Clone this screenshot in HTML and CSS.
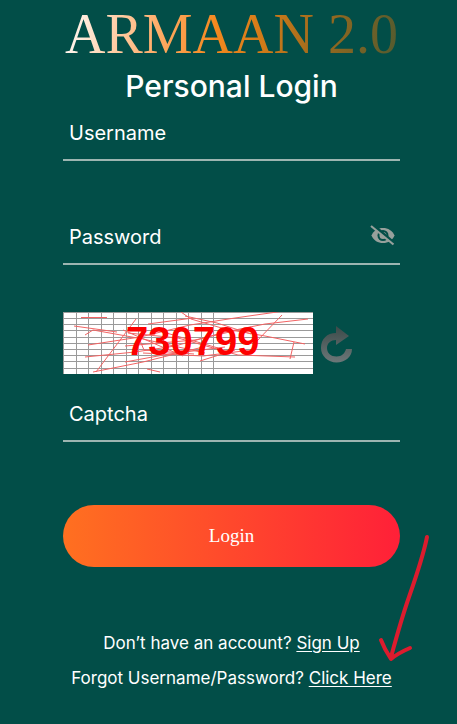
FILE: index.html
```
<!DOCTYPE html>
<html lang="en">
<head>
  <meta charset="UTF-8" />
  <meta name="viewport" content="width=device-width, initial-scale=1.0"/>
  <title>ARMAAN 2.0</title>
  <link rel="stylesheet" href="styles.css">
</head>
<body>

  <main class="container">
    <h1 class="brand">ARMAAN 2.0</h1>
    <h2 class="title">Personal Login</h2>

    <form class="login-form" onsubmit="return false">
      <div class="field">
        <label for="username">Username</label>
        <input type="text" id="username" />
      </div>

      <div class="field">
        <label for="password">Password</label>
        <input type="password" id="password" />
        <button type="button" class="toggle-btn" aria-label="Show password">
          <svg width="26" height="24" viewBox="0 0 26 24">
            <path d="M1.500 12.500C3.500 7.500 8 5 13 5s9.500 2.500 11.500 7.500C22.500 17.500 18 20 13 20S3.500 17.500 1.500 12.500z" fill="#97a09c"/>
            <circle cx="13" cy="12.500" r="5.500" fill="#024e48"/>
            <circle cx="13" cy="12.500" r="3.500" fill="#97a09c"/>
            <path d="M3 2l22 19" stroke="#024e48" stroke-width="3"/>
            <path d="M1 3l22.500 18.500" stroke="#97a09c" stroke-width="2.200"/>
          </svg>
        </button>
      </div>

      <!-- Captcha -->
      <div class="captcha-row">
        <svg class="captcha" width="250" height="62" viewBox="0 0 250 62" role="img" aria-label="Captcha code">
          <rect width="250" height="62" fill="#fff"/>
          <path shape-rendering="crispEdges" fill="none" stroke="#9a9a9a" d="M0 .5h250M0 6.500h250M0 12.500h250M0 18.500h250M0 25.500h250M0 31.500h250M0 37.500h250M0 43.500h250M0 49.500h250M0 56.500h250M.5 0v62M13.500 0v62M25.500 0v62M38.500 0v62M50.500 0v62M63.500 0v62M75.500 0v62M88.500 0v62M100.500 0v62M113.500 0v62M125.500 0v62M138.500 0v62M150.500 0v62"/>
          <g fill="none" stroke="#f26464" stroke-width="1">
            <path d="M18 5.500h26M11 14l43 6M22 23l8-5 50 9 62 14M25 33l52-8 50-12 45-7 49-7"/>
            <path d="M22 45l50-5 40-6 50-14 40-8 43-5M33 60L73 7M30 60l50-10 60-15M62 50l44-8 56-7"/>
            <path d="M118 0l10 7 34 10 40 7 40 8M85 12l45-6M122 4l32 7 34 11M192 31L219 3"/>
            <path d="M65 21l50 5 60 17 57 2M84 57l13 3M137 49l35-11M231 30l-4 17M62 34l70-6 56-13"/>
            <path d="M75 24l6 14 50 4M60 18l60 26M80 41l60 3 40-5M100 20l55 16"/>
          </g>
          <text class="captcha-text" x="63" y="43">730799</text>
        </svg>
        <button type="button" class="refresh-btn" aria-label="Refresh captcha">
          <svg width="34" height="40" viewBox="0 0 34 40">
            <defs>
              <linearGradient id="metal" x1="0" y1="0" x2="0" y2="1">
                <stop offset="0" stop-color="#3c4a49"/>
                <stop offset="1" stop-color="#6c7778"/>
              </linearGradient>
            </defs>
            <path d="M16 3L29 13 16 22v-5C11 17 7 20 7 25c0 5 4 8.500 9.500 8.500S25 30 26 26h6c0 8-7 13.500-15.500 13.500S1 33 1 25c0-9 6-15 15-15z" fill="url(#metal)"/>
          </svg>
        </button>
      </div>

      <div class="field captcha-field">
        <label for="captcha">Captcha</label>
        <input type="text" id="captcha" />
      </div>

      <button type="submit" class="login-btn">Login</button>
    </form>

    <div class="links">
      <p>Don’t have an account? <a href="#">Sign Up</a></p>
      <p>Forgot Username/Password? <a href="#">Click Here</a></p>
      <svg class="arrow" width="52" height="128" viewBox="0 0 52 128">
        <path d="M49 3C45 23 38 43 31 63S19 101 13 123M3 106c3 8 6 13 10 19 6-5 12-8 19-11" fill="none" stroke="#dc1c2e" stroke-width="4" stroke-linecap="round" stroke-linejoin="round"/>
      </svg>
    </div>
  </main>

</body>
</html>
```
FILE: styles.css
```
:root {
  --bg: #024e48;
  --line: #9db5b1;
  --text-color: #fff;
}

* {
  box-sizing: border-box;
}

body {
  margin: 0;
  font-family: Inter, sans-serif;
  background: var(--bg);
  color: var(--text-color);
}

.container {
  padding: 4px 57px 24px 63px;
}

.brand {
  margin: 0;
  font-family: "Liberation Serif", serif;
  font-size: 56px;
  font-weight: normal;
  line-height: 60px;
  text-align: center;
  white-space: nowrap;
  background: linear-gradient(100deg, #fff 0%, #ffb070 27%, #f5891f 45%, #cf7a18 60%, #94681f 78%, #4f5a30 100%);
  -webkit-background-clip: text;
  background-clip: text;
  color: transparent;
}

.title {
  margin: 0;
  font-size: 30px;
  font-weight: 500;
  line-height: 44px;
  text-align: center;
}

.login-form {
  display: flex;
  flex-direction: column;
}

/* label sits on top of its input */
.field {
  display: grid;
  align-items: center;
  margin-bottom: 52px;
}

.field label,
.field input,
.toggle-btn {
  grid-area: 1 / 1;
}

.field label {
  padding: 0 6px 4px;
  font-size: 20px;
  pointer-events: none;
}

.field input {
  width: 100%;
  height: 53px;
  padding: 0 6px;
  background: none;
  border: none;
  border-bottom: 2px solid var(--line);
  border-radius: 0;
  outline: none;
  color: var(--text-color);
  font-size: 20px;
}

.field + .field {
  margin-top: -1px;
}

.toggle-btn,
.refresh-btn {
  display: flex;
  padding: 0;
  background: none;
  border: none;
  cursor: pointer;
}

.toggle-btn {
  justify-self: end;
  margin: 0 4px 8px 0;
}

.captcha-row {
  display: flex;
  align-items: center;
  gap: 7px;
  margin-top: -5px;
  margin-bottom: 15px;
}

.captcha-text {
  font-family: "Liberation Sans", sans-serif;
  font-size: 40px;
  font-weight: bold;
  fill: #fe0000;
}

.captcha-field {
  margin-bottom: 63px;
}

.login-btn {
  height: 62px;
  background: linear-gradient(to right, #ff7020, #ff2038);
  border: none;
  border-radius: 31px;
  color: var(--text-color);
  font-family: "Liberation Serif", serif;
  font-size: 19px;
  cursor: pointer;
}

.links {
  position: relative;
  margin-top: 59px;
  font-size: 17px;
  line-height: 35px;
  text-align: center;
  white-space: nowrap;
}

.links p {
  margin: 0;
}

.links a {
  color: inherit;
  text-underline-offset: 2px;
}

/* pointer to the reset link */
.arrow {
  position: absolute;
  right: -30px;
  bottom: 34px;
  pointer-events: none;
}
```
